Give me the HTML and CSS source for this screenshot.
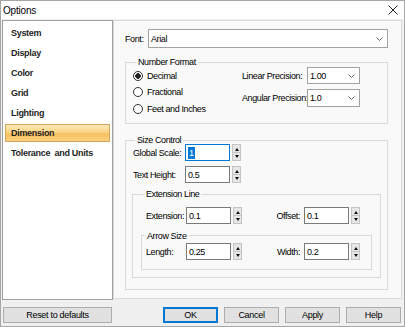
FILE: index.html
```html
<!DOCTYPE html>
<html>
<head>
    <title>Options</title>
    <link rel="stylesheet" href="styles.css">
</head>
<body>
    <div class="window">
        <div class="titlebar">
            <span class="title">Options</span>
            <svg class="close" width="10" height="10" viewBox="0 0 10 10">
                <path d="M0.5 0.5 L9.5 9.5 M9.5 0.5 L0.5 9.5" stroke="#222" stroke-width="1" fill="none"/>
            </svg>
        </div>

        <div class="main">
            <ul class="sidebar">
                <li>System</li>
                <li>Display</li>
                <li>Color</li>
                <li>Grid</li>
                <li>Lighting</li>
                <li class="active">Dimension</li>
                <li>Tolerance&nbsp; and Units</li>
            </ul>

            <div class="pane">
                <div class="font-row">
                    <span class="font-label">Font:</span>
                    <div class="combo combo-wide">
                        <span>Arial</span>
                        <svg class="chevron" width="7" height="4" viewBox="0 0 7 4"><path d="M0.5 0.5 L3.5 3.5 L6.5 0.5" stroke="#666" fill="none"/></svg>
                    </div>
                </div>

                <!-- Number Format -->
                <fieldset class="group number-format">
                    <legend>Number Format</legend>
                    <div class="nf-body">
                        <div class="radios">
                            <div class="radio"><span class="dot checked"></span>Decimal</div>
                            <div class="radio"><span class="dot"></span>Fractional</div>
                            <div class="radio"><span class="dot"></span>Feet and Inches</div>
                        </div>
                        <div class="precision">
                            <div class="prec-row">
                                <span class="prec-label">Linear Precision:</span>
                                <div class="combo combo-small">
                                    <span>1.00</span>
                                    <svg class="chevron" width="7" height="4" viewBox="0 0 7 4"><path d="M0.5 0.5 L3.5 3.5 L6.5 0.5" stroke="#666" fill="none"/></svg>
                                </div>
                            </div>
                            <div class="prec-row prec-row-2">
                                <span class="prec-label">Angular Precision:</span>
                                <div class="combo combo-small tall">
                                    <span>1.0</span>
                                    <svg class="chevron" width="7" height="4" viewBox="0 0 7 4"><path d="M0.5 0.5 L3.5 3.5 L6.5 0.5" stroke="#666" fill="none"/></svg>
                                </div>
                            </div>
                        </div>
                    </div>
                </fieldset>

                <!-- Size Control -->
                <fieldset class="group size-control">
                    <legend>Size Control</legend>
                    <div class="sc-row first">
                        <span class="sc-label">Global Scale:</span>
                        <div class="textbox focused"><span class="sel">1</span></div>
                        <div class="spinner"><span class="up"></span><span class="down"></span></div>
                    </div>
                    <div class="sc-row second">
                        <span class="sc-label">Text Height:</span>
                        <div class="textbox">0.5</div>
                        <div class="spinner"><span class="up"></span><span class="down"></span></div>
                    </div>

                    <fieldset class="group extension-line">
                        <legend>Extension Line</legend>
                        <div class="pair-row ext-row">
                            <span class="pair-label">Extension:</span>
                            <div class="textbox">0.1</div>
                            <div class="spinner"><span class="up"></span><span class="down"></span></div>
                            <div class="right-pair">
                                <span class="pair-label-r">Offset:</span>
                                <div class="textbox">0.1</div>
                                <div class="spinner"><span class="up"></span><span class="down"></span></div>
                            </div>
                        </div>

                        <fieldset class="group arrow-size">
                            <legend>Arrow Size</legend>
                            <div class="pair-row arrow-row">
                                <span class="pair-label">Length:</span>
                                <div class="textbox">0.25</div>
                                <div class="spinner"><span class="up"></span><span class="down"></span></div>
                                <div class="right-pair">
                                    <span class="pair-label-r">Width:</span>
                                    <div class="textbox">0.2</div>
                                    <div class="spinner"><span class="up"></span><span class="down"></span></div>
                                </div>
                            </div>
                        </fieldset>
                    </fieldset>
                </fieldset>
            </div>
        </div>

        <div class="footer">
            <button class="btn reset">Reset to defaults</button>
            <button class="btn default">OK</button>
            <button class="btn">Cancel</button>
            <button class="btn">Apply</button>
            <button class="btn">Help</button>
        </div>
    </div>
</body>
</html>
```

FILE: styles.css
```css
/* General */
* {
    box-sizing: border-box;
}
body {
    margin: 0;
    font-family: "Liberation Sans", Arial, sans-serif;
    font-size: 9px;
    letter-spacing: -0.4px;
    white-space: nowrap;
    color: #000;
    background: #fff;
}
/* Window frame */
.window {
    width: 405px;
    height: 327px;
    border: 1px solid #a6a6a6;
    background: #f0f0f0;
    display: flex;
    flex-direction: column;
}
.titlebar {
    height: 18px;
    flex-shrink: 0;
    background: #fff;
    display: flex;
    align-items: center;
    justify-content: space-between;
    padding: 0 6px 0 2px;
    font-size: 10px;
    letter-spacing: -0.2px;
}
.main {
    display: flex;
    align-items: flex-start;
    padding: 1px 2px 0 1px;
}
/* Left list */
.sidebar {
    display: flex;
    flex-direction: column;
    gap: 2px;
    width: 111px;
    height: 280px;
    flex-shrink: 0;
    margin: 0;
    padding: 3px 2px 0;
    list-style: none;
    background: #fff;
    border: 1px solid #a0a0a0;
}
.sidebar li {
    height: 18px;
    padding-left: 5px;
    border: 1px solid transparent;
    line-height: 16px;
    font-size: 9px;
    font-weight: bold;
    letter-spacing: -0.3px;
    color: #1e1e1e;
}
.sidebar li.active {
    border-color: #d4a55a;
    background: linear-gradient(#fdeab8, #fbd485 45%, #f8c062 55%, #fbd080);
}
/* Right pane */
.pane {
    width: 289px;
    height: 279px;
    flex-shrink: 0;
    background: #f9f9f9;
    border: 1px solid #dadada;
    padding: 8px 13px 0 11px;
}
.font-row {
    display: flex;
    align-items: center;
}
.font-label {
    width: 23px;
    flex-shrink: 0;
}
.combo {
    display: flex;
    align-items: center;
    justify-content: space-between;
    flex-shrink: 0;
    height: 17px;
    padding: 0 4px 0 2px;
    background: #fff;
    border: 1px solid #a2a2a2;
}
.combo-wide {
    width: 240px;
    height: 19px;
}
.combo-small {
    width: 53px;
}
.combo.tall {
    height: 18px;
}
/* Group boxes */
.group {
    margin: 0;
    padding: 0;
    min-width: 0;
    border: 1px solid #d9d9d9;
}
.group legend {
    margin-left: 3px;
    padding: 0 2px;
    line-height: 10px;
}
.number-format {
    margin-top: 9px;
    padding: 0 0 6px 7px;
}
.nf-body {
    display: flex;
}
.radios {
    width: 109px;
    flex-shrink: 0;
    padding-top: 0.5px;
}
.radio {
    height: 16.5px;
    display: flex;
    align-items: center;
}
.dot {
    width: 10px;
    height: 10px;
    margin-right: 4px;
    border: 1px solid #333;
    border-radius: 50%;
    background: #fff;
}
.dot.checked {
    background: radial-gradient(circle, #222 2.5px, #fff 3px);
}
.prec-row {
    display: flex;
    align-items: center;
}
.prec-row-2 {
    margin-top: 5px;
}
.prec-label {
    width: 65px;
    flex-shrink: 0;
}
/* Size control */
.size-control {
    margin-top: 11px;
    padding: 0 6px 11px 6px;
}
.sc-row {
    display: flex;
    align-items: center;
    padding-left: 1px;
}
.sc-row.first {
    margin-top: -1px;
}
.sc-row.second {
    margin-top: 5px;
}
.sc-label {
    width: 52px;
    flex-shrink: 0;
}
.textbox {
    display: flex;
    align-items: center;
    flex-shrink: 0;
    width: 45px;
    height: 17px;
    padding-left: 2px;
    background: #fff;
    border: 1px solid #7a7a7a;
}
.textbox.focused {
    border-color: #0078d7;
}
.sel {
    background: #0078d7;
    color: #fff;
    padding: 0 1px;
    line-height: 12px;
}
.spinner {
    display: flex;
    flex-direction: column;
    flex-shrink: 0;
    width: 9px;
    height: 17px;
    margin-left: 2px;
}
.spinner span {
    position: relative;
    flex: 1;
    background: #e6e6e6;
    border: 1px solid #c4c4c4;
}
.spinner .down {
    border-top: none;
}
.spinner span::after {
    content: "";
    position: absolute;
    left: 1.5px;
    top: 2.5px;
    border-left: 2.5px solid transparent;
    border-right: 2.5px solid transparent;
}
.spinner .up::after {
    border-bottom: 3px solid #111;
}
.spinner .down::after {
    top: 2px;
    border-top: 3px solid #111;
}
/* Extension line / arrow size */
.extension-line {
    margin-top: 6px;
    padding: 0 8px 7.5px 8px;
}
.pair-row {
    display: flex;
    align-items: center;
}
.ext-row {
    margin-top: 8px;
    padding: 0 12px 0 5px;
}
.pair-label {
    width: 40px;
    flex-shrink: 0;
}
.right-pair {
    display: flex;
    align-items: center;
    margin-left: auto;
}
.pair-label-r {
    margin-right: 4px;
}
.arrow-size {
    margin-top: 6.5px;
    padding: 0 0 8.5px 0;
}
.arrow-row {
    margin-top: 2.5px;
    padding: 0 11px 0 4px;
}
/* Footer buttons */
.footer {
    display: flex;
    gap: 6px;
    padding: 7px 3px 0 2px;
}
.btn {
    width: 55px;
    height: 16px;
    padding: 0;
    font-family: "Liberation Sans", Arial, sans-serif;
    font-size: 9px;
    letter-spacing: -0.3px;
    color: #000;
    background: #e1e1e1;
    border: 1px solid #adadad;
}
.btn.reset {
    width: 109px;
    margin-right: auto;
}
.btn.default {
    border: 1px solid #0078d7;
    box-shadow: inset 0 0 0 1px #0078d7;
}
```
